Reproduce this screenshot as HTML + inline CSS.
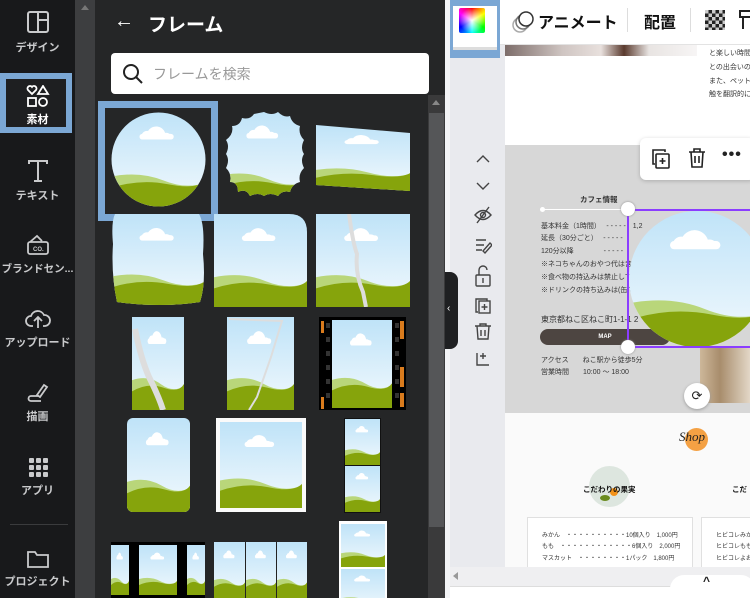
<!DOCTYPE html>
<html><head><meta charset="utf-8">
<style>
*{margin:0;padding:0;box-sizing:border-box}
body{width:750px;height:598px;overflow:hidden;position:relative;background:#e9eaee;font-family:"Liberation Sans","Noto Sans CJK JP",sans-serif}
.a{position:absolute}
.rail{left:0;top:0;width:75px;height:598px;background:#18191b}
.ri{position:absolute;left:0;width:75px;text-align:center;color:#c9cacc;font-size:11px;font-weight:bold}
.ri svg{display:block;margin:0 auto 4px}
.t{position:absolute;color:#333;font-size:7px;white-space:nowrap}
svg.f{position:absolute}
</style></head><body>
<svg width="0" height="0" style="position:absolute">
<defs>
<linearGradient id="sk" x1="0" y1="0" x2="0" y2="1"><stop offset="0" stop-color="#bfe3f8"/><stop offset="1" stop-color="#f2f9fd"/></linearGradient>
<symbol id="ls" viewBox="0 0 100 100" preserveAspectRatio="none">
<rect width="100" height="100" fill="url(#sk)"/>
<path d="M32 27 a6 6 0 0 1 7-7 a10 10 0 0 1 18 2 a6 6 0 0 1 7 5 z" fill="#fff"/>
<rect x="30" y="23" width="36" height="6" rx="3" fill="#fff"/>
<path d="M0 68 Q30 62 55 72 T100 74 V100 H0z" fill="#b9d67a"/>
<path d="M0 80 Q30 70 60 76 T100 72 V100 H0z" fill="#86a40c"/>
</symbol>
</defs></svg>

<div class="a rail"></div>
<div class="ri" style="top:9px"><svg width="26" height="26" viewBox="0 0 26 26" fill="none" stroke="#c9cacc" stroke-width="2"><rect x="3" y="3" width="20" height="20" rx="2"/><path d="M13 3v20M13 11h10"/></svg>デザイン</div>
<div class="a" style="left:0;top:73px;width:72px;height:60px;border:6px solid #7ba7d4;background:#1e1f21"></div>
<div class="ri" style="top:85px;color:#fff"><svg width="24" height="22" viewBox="0 0 24 22" fill="none" stroke="#fff" stroke-width="1.8"><path d="M6 9 L2 5 a2.5 2.5 0 0 1 4-3 a2.5 2.5 0 0 1 4 3z"/><path d="M17 1 L22 9 H12z"/><rect x="2" y="13" width="8" height="8"/><circle cx="17" cy="17" r="4"/></svg>素材</div>
<div class="ri" style="top:159px"><svg width="22" height="24" viewBox="0 0 22 24" fill="none" stroke="#c9cacc" stroke-width="2"><path d="M2 5V2h18v3M11 2v20M7 22h8"/></svg>テキスト</div>
<div class="ri" style="top:233px;font-size:10.5px"><svg width="26" height="24" viewBox="0 0 26 24" fill="none" stroke="#c9cacc" stroke-width="1.8"><path d="M5 9 L12 3 L17 8"/><rect x="3" y="9" width="20" height="12" rx="2"/><text x="8" y="18" font-size="6" fill="#c9cacc" stroke="none">CO.</text></svg>ブランドセン...</div>
<div class="ri" style="top:308px"><svg width="26" height="22" viewBox="0 0 26 22" fill="none" stroke="#c9cacc" stroke-width="1.8"><path d="M8 18H6a5 5 0 0 1 0-10 a7 7 0 0 1 13-1 a5 5 0 0 1 1 11h-2M13 20V10M9 13l4-4 4 4"/></svg>アップロード</div>
<div class="ri" style="top:382px"><svg width="22" height="22" viewBox="0 0 22 22" fill="none" stroke="#c9cacc" stroke-width="1.8"><path d="M10 13 L17 3 l3 2 L13 15z M11 14 H4a2.5 2.5 0 0 0 0 5 h10"/></svg>描画</div>
<div class="ri" style="top:456px"><svg width="22" height="22" viewBox="0 0 22 22" fill="#c9cacc"><rect x="2" y="2" width="5" height="5" rx="1"/><rect x="9" y="2" width="5" height="5" rx="1"/><rect x="16" y="2" width="5" height="5" rx="1"/><rect x="2" y="9" width="5" height="5" rx="1"/><rect x="9" y="9" width="5" height="5" rx="1"/><rect x="16" y="9" width="5" height="5" rx="1"/><rect x="2" y="16" width="5" height="5" rx="1"/><rect x="9" y="16" width="5" height="5" rx="1"/><rect x="16" y="16" width="5" height="5" rx="1"/></svg>アプリ</div>
<div class="a" style="left:10px;top:524px;width:58px;height:1px;background:#3a3b3d"></div>
<div class="ri" style="top:549px"><svg width="24" height="20" viewBox="0 0 24 20" fill="none" stroke="#c9cacc" stroke-width="1.8"><path d="M2 3h7l2 3h11v12H2z"/></svg>プロジェクト</div>

<div class="a" style="left:75px;top:0;width:20px;height:598px;background:#3d3e40"></div>
<div class="a" style="left:81px;top:5px;border:4px solid transparent;border-bottom:5px solid #777;border-top:0"></div>
<div class="a" style="left:95px;top:0;width:350px;height:598px;background:#252627"></div>
<div class="a" style="left:114px;top:10px;color:#fff;font-size:20px">←</div>
<div class="a" style="left:148px;top:10px;color:#fff;font-size:19px;font-weight:bold">フレーム</div>
<div class="a" style="left:111px;top:53px;width:318px;height:41px;background:#fff;border-radius:4px"></div>
<svg class="f" style="left:122px;top:63px" width="22" height="22" viewBox="0 0 22 22" fill="none" stroke="#222" stroke-width="2"><circle cx="9" cy="9" r="7"/><path d="M14 14l6 6"/></svg>
<div class="a" style="left:153px;top:64px;color:#999;font-size:14px">フレームを検索</div>
<div class="a" style="left:428px;top:95px;width:17px;height:503px;background:#3a3a3b"></div>
<div class="a" style="left:432px;top:100px;border:4px solid transparent;border-bottom:5px solid #888;border-top:0"></div>
<div class="a" style="left:429px;top:113px;width:15px;height:414px;background:#555658"></div>
<div class="a" style="left:445px;top:0;width:5px;height:598px;background:#f3f4f6"></div>

<!-- row1 -->
<div class="a" style="left:98px;top:101px;width:120px;height:120px;border:7px solid #7ba7d4"></div>
<svg class="f" style="left:111px;top:112px" width="95" height="95"><defs><clipPath id="c1"><circle cx="47.5" cy="47.5" r="47"/></clipPath></defs><use href="#ls" width="95" height="95" clip-path="url(#c1)"/></svg>
<svg class="f" style="left:220px;top:111px" width="88" height="95"><defs><clipPath id="c2"><path d="M44 1 q8 4 14 0 q6 6 12 4 q2 8 10 10 q-2 8 4 14 q-4 8 0 14 q-4 6 0 14 q-6 6 -4 14 q-8 2 -10 10 q-8 -2 -12 4 q-8 -4 -14 0 q-6 -4 -14 0 q-4 -8 -12 -4 q0 -10 -8 -10 q2 -8 -4 -14 q4 -8 0 -14 q4 -8 0 -14 q8 -6 6 -14 q8 0 10 -8 q8 2 12 -4z"/></clipPath></defs><use href="#ls" width="88" height="95" clip-path="url(#c2)"/></svg>
<svg class="f" style="left:316px;top:125px" width="95" height="66"><defs><clipPath id="c3"><path d="M0 0 L94 8 V66 L0 60z"/></clipPath></defs><use href="#ls" width="95" height="66" clip-path="url(#c3)"/></svg>
<!-- row2 -->
<svg class="f" style="left:111px;top:214px" width="95" height="92"><defs><clipPath id="c4"><path d="M4 0 H88 Q94 10 92 40 Q95 70 89 88 Q50 94 6 88 Q0 60 2 30 Q0 8 4 0z"/></clipPath></defs><use href="#ls" width="95" height="92" clip-path="url(#c4)"/></svg>
<svg class="f" style="left:214px;top:214px" width="93" height="93"><defs><clipPath id="c5"><path d="M0 0 H75 Q93 0 93 18 V93 H0z"/></clipPath></defs><use href="#ls" width="93" height="93" clip-path="url(#c5)"/></svg>
<svg class="f" style="left:316px;top:214px" width="94" height="93"><use href="#ls" width="94" height="93"/><path d="M33 0 q4 30 8 40 q-2 20 6 38 l3 15" stroke="#ddd" stroke-width="4" fill="none"/></svg>
<!-- row3 -->
<svg class="f" style="left:132px;top:317px" width="52" height="93"><use href="#ls" width="52" height="93"/><path d="M3 12 q6 30 14 48 q10 20 14 33" stroke="#ddd" stroke-width="6" fill="none"/></svg>
<svg class="f" style="left:227px;top:317px" width="67" height="93"><use href="#ls" width="67" height="93"/><path d="M2 2 L55 4 L44 40 L30 80 L22 93" stroke="#ddd" stroke-width="2" fill="none"/></svg>
<svg class="f" style="left:319px;top:317px" width="87" height="93"><rect width="87" height="93" fill="#000"/><use href="#ls" x="13" y="3" width="60" height="88"/><g fill="#d97b1d"><rect x="2" y="4" width="3" height="12"/><rect x="2" y="80" width="3" height="12"/><rect x="81" y="4" width="4" height="18"/><rect x="81" y="50" width="4" height="20"/><rect x="81" y="76" width="4" height="14"/></g><g fill="#333"><rect x="7" y="6" width="4" height="5"/><rect x="7" y="20" width="4" height="5"/><rect x="7" y="34" width="4" height="5"/><rect x="7" y="48" width="4" height="5"/><rect x="7" y="62" width="4" height="5"/><rect x="7" y="76" width="4" height="5"/><rect x="76" y="6" width="4" height="5"/><rect x="76" y="20" width="4" height="5"/><rect x="76" y="34" width="4" height="5"/><rect x="76" y="48" width="4" height="5"/><rect x="76" y="62" width="4" height="5"/><rect x="76" y="76" width="4" height="5"/></g></svg>
<!-- row4 -->
<svg class="f" style="left:127px;top:418px" width="63" height="94"><defs><clipPath id="c6"><rect width="63" height="94" rx="6"/></clipPath></defs><use href="#ls" width="63" height="94" clip-path="url(#c6)"/></svg>
<svg class="f" style="left:216px;top:418px" width="90" height="94"><rect width="90" height="94" fill="#fafafa"/><use href="#ls" x="4" y="4" width="82" height="86"/></svg>
<svg class="f" style="left:344px;top:418px" width="37" height="95"><rect width="37" height="95" fill="#111"/><use href="#ls" x="1" y="1" width="35" height="46"/><use href="#ls" x="1" y="48" width="35" height="46"/></svg>
<!-- row5 -->
<svg class="f" style="left:111px;top:542px" width="94" height="56"><rect width="94" height="56" fill="#000"/><use href="#ls" x="0" y="3" width="18" height="50"/><use href="#ls" x="28" y="3" width="38" height="50"/><use href="#ls" x="76" y="3" width="18" height="50"/></svg>
<svg class="f" style="left:214px;top:542px" width="93" height="56"><use href="#ls" width="31" height="56"/><use href="#ls" x="32" width="30" height="56"/><use href="#ls" x="63" width="30" height="56"/><rect x="31" width="1" height="56" fill="#222"/><rect x="62" width="1" height="56" fill="#222"/></svg>
<svg class="f" style="left:339px;top:521px" width="48" height="77"><rect width="48" height="77" fill="#fff"/><use href="#ls" x="2" y="3" width="44" height="43"/><use href="#ls" x="2" y="48" width="44" height="43"/></svg>

<!-- canvas -->
<div class="a" style="left:450px;top:0;width:300px;height:45px;background:#fff;border-bottom:1px solid #e3e3e3"></div>
<div class="a" style="left:450px;top:0;width:50px;height:58px;background:#7ba7d4"></div>
<div class="a" style="left:453px;top:6px;width:44px;height:44px;background:#fff;border-bottom:3px solid #ddd"></div>
<div class="a" style="left:459px;top:8px;width:26px;height:25px;border-radius:2px;background:radial-gradient(circle,#fff 0,rgba(255,255,255,0) 70%),conic-gradient(#f00,#ff0,#0f0,#0ff,#00f,#f0f,#f00)"></div>
<svg class="f" style="left:511px;top:9px" width="24" height="24" fill="none" stroke="#333" stroke-width="1.5"><circle cx="9" cy="16" r="7" stroke="#aaa"/><circle cx="12" cy="13" r="7" stroke="#777"/><circle cx="15" cy="10" r="7" fill="#fff"/></svg>
<div class="a" style="left:538px;top:9px;font-size:16px;font-weight:bold;color:#111">アニメート</div>
<div class="a" style="left:627px;top:8px;width:1px;height:24px;background:#ddd"></div>
<div class="a" style="left:644px;top:9px;font-size:16px;font-weight:bold;color:#111">配置</div>
<div class="a" style="left:690px;top:8px;width:1px;height:24px;background:#ddd"></div>
<div class="a" style="left:705px;top:10px;width:20px;height:20px;background:repeating-conic-gradient(#222 0 25%,#ccc 0 50%) 0 0/7px 7px"></div>
<svg class="f" style="left:738px;top:9px" width="14" height="22" fill="none" stroke="#222" stroke-width="2"><path d="M2 2h12v6H2z M5 8v12"/></svg>

<div class="a" style="left:505px;top:45px;width:245px;height:368px;background:#fff"></div>
<div class="a" style="left:505px;top:45px;width:192px;height:11px;background:linear-gradient(90deg,#7d6d6a,#cfc5c2 30%,#e8e0dd 50%,#5a3a2e 62%,#e8e4e2 75%,#f7f5f5)"></div>
<div class="t" style="left:709px;top:48px">と楽しい時間</div>
<div class="t" style="left:709px;top:62px">との出会いの</div>
<div class="t" style="left:709px;top:76px">また、ペット</div>
<div class="t" style="left:709px;top:89px">触を翻訳的に</div>
<div class="a" style="left:505px;top:145px;width:245px;height:268px;background:#d7d7d7"></div>
<div class="t" style="left:580px;top:194px;font-weight:bold;font-size:7.5px">カフェ情報</div>
<div class="a" style="left:542px;top:209px;width:86px;height:1px;background:#fff"></div>
<div class="a" style="left:540px;top:207px;width:5px;height:5px;border-radius:50%;background:#fff"></div>
<div class="t" style="left:541px;top:221px">基本料金（1時間）　 - - - - -　1,2</div>
<div class="t" style="left:541px;top:233px">延長（30分ごと）　 - - - - -</div>
<div class="t" style="left:541px;top:246px">120分以降　　　　 - - - - -</div>
<div class="t" style="left:541px;top:259px">※ネコちゃんのおやつ代は含</div>
<div class="t" style="left:541px;top:272px">※食べ物の持込みは禁止して</div>
<div class="t" style="left:541px;top:285px">※ドリンクの持ち込みは(缶で</div>
<div class="t" style="left:541px;top:314px;font-size:8px">東京都ねこ区ねこ町1-1-1 2</div>
<div class="a" style="left:540px;top:329px;width:130px;height:16px;border-radius:8px;background:#4d4541;color:#fff;font-size:6px;text-align:center;line-height:16px;font-weight:bold">MAP</div>
<div class="t" style="left:541px;top:355px">アクセス　　ねこ駅から徒歩5分</div>
<div class="t" style="left:541px;top:367px">営業時間　　10:00 ～ 18:00</div>
<div class="a" style="left:700px;top:348px;width:50px;height:55px;background:linear-gradient(90deg,#cdb79a,#a88d6c 40%,#e3d7c7)"></div>
<svg class="f" style="left:628px;top:209px" width="122" height="139"><defs><clipPath id="c7"><circle cx="69" cy="70" r="68"/></clipPath></defs><use href="#ls" width="140" height="139" clip-path="url(#c7)"/></svg>
<div class="a" style="left:627px;top:209px;width:130px;height:139px;border:2px solid #8b3dff"></div>
<div class="a" style="left:621px;top:202px;width:14px;height:14px;border-radius:50%;background:#fff;box-shadow:0 0 2px #888"></div>
<div class="a" style="left:621px;top:340px;width:14px;height:14px;border-radius:50%;background:#fff;box-shadow:0 0 2px #888"></div>
<div class="a" style="left:684px;top:383px;width:26px;height:26px;border-radius:50%;background:#fff;box-shadow:0 1px 3px #999;font-size:13px;text-align:center;line-height:26px;color:#222">⟳</div>

<div class="a" style="left:640px;top:138px;width:115px;height:42px;background:#fff;border-radius:6px;box-shadow:0 1px 4px rgba(0,0,0,.2)"></div>
<svg class="f" style="left:651px;top:148px" width="20" height="22" fill="none" stroke="#222" stroke-width="1.6"><path d="M4 16H2V2h12v2"/><rect x="5" y="6" width="13" height="14" rx="1"/><path d="M11.5 10v6M8.5 13h6"/></svg>
<svg class="f" style="left:687px;top:147px" width="20" height="22" fill="none" stroke="#222" stroke-width="1.6"><path d="M2 5h16M7 5V2h6v3M4 5l1 15h10l1-15M8 9v7M12 9v7"/></svg>
<div class="a" style="left:722px;top:146px;font-size:16px;font-weight:bold;color:#222;letter-spacing:1px">•••</div>

<svg class="f" style="left:474px;top:150px" width="18" height="220" fill="none" stroke="#444" stroke-width="1.4"><path d="M3 12l6-6 6 6M3 33l6 6 6-6"/><path d="M1 65q8-9 16 0q-8 9-16 0z"/><circle cx="9" cy="65" r="2.5"/><path d="M3 73L15 57"/><path d="M2 90h10M2 95h8M2 100h6M9 101l7-8 2 2-7 8z"/><rect x="2" y="125" width="14" height="11" rx="1"/><path d="M5 125v-5a4 4 0 0 1 8 0M9 128v5"/><path d="M4 162H2v-13h11v2"/><rect x="5" y="151" width="11" height="12"/><path d="M10.5 154v6M7.5 157h6"/><path d="M1 176h16M6 176v-2h6v2M3 176l1 13h10l1-13M7 180v6M11 180v6"/><path d="M3 203v12h12M9 203v6M6 206h6"/></svg>
<div class="a" style="left:445px;top:272px;width:13px;height:77px;background:#1f2022;border-radius:0 8px 8px 0"></div>
<div class="a" style="left:447px;top:303px;color:#fff;font-size:10px">‹</div>

<div class="a" style="left:505px;top:413px;width:245px;height:160px;background:#fafafa"></div>
<div class="a" style="left:685px;top:428px;width:23px;height:23px;border-radius:50%;background:#f4a144"></div>
<div class="a" style="left:679px;top:429px;font-family:'Liberation Serif',serif;font-style:italic;font-size:13px;color:#222">Shop</div>
<div class="a" style="left:589px;top:466px;width:41px;height:41px;border-radius:50%;background:#dde6df"></div>
<div class="a" style="left:610px;top:488px;width:8px;height:8px;border-radius:50%;background:#f39218"></div>
<div class="a" style="left:600px;top:495px;width:10px;height:6px;background:#6a8b1e;border-radius:50%"></div>
<div class="t" style="left:583px;top:484px;font-weight:bold;font-size:7.5px;color:#111">こだわりの果実</div>
<div class="t" style="left:732px;top:484px;font-weight:bold;font-size:7.5px;color:#111">こだ</div>
<div class="a" style="left:527px;top:517px;width:166px;height:56px;background:#fff;border:1px solid #e0e0e0"></div>
<div class="a" style="left:701px;top:517px;width:60px;height:56px;background:#fff;border:1px solid #e0e0e0"></div>
<div class="t" style="left:542px;top:530px;font-size:6px">みかん　・・・・・・・・・・10個入り　1,000円</div>
<div class="t" style="left:542px;top:541px;font-size:6px">もも　・・・・・・・・・・・・6個入り　2,000円</div>
<div class="t" style="left:542px;top:553px;font-size:6px">マスカット　・・・・・・・・1パック　1,800円</div>
<div class="t" style="left:716px;top:530px;font-size:6px">ヒビコレみか</div>
<div class="t" style="left:716px;top:541px;font-size:6px">ヒビコレもも</div>
<div class="t" style="left:716px;top:553px;font-size:6px">ヒビコレよお</div>

<div class="a" style="left:450px;top:567px;width:300px;height:20px;background:#efeff1;border-bottom:1px solid #ddd"></div>
<div class="a" style="left:453px;top:572px;border:4px solid transparent;border-right:5px solid #999;border-left:0"></div>
<div class="a" style="left:450px;top:587px;width:300px;height:11px;background:#fff"></div>
<div class="a" style="left:670px;top:575px;width:85px;height:23px;background:#fff;border-radius:14px 14px 0 0"></div>
<div class="a" style="left:703px;top:574px;font-size:12px;font-weight:bold;color:#222">^</div>
</body></html>
